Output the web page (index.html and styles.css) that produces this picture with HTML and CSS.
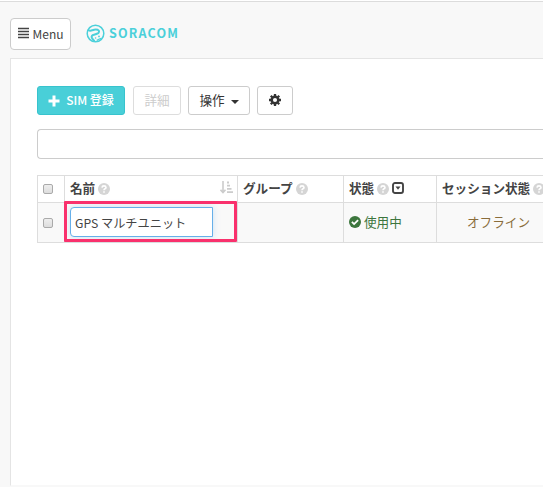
FILE: index.html
```html
<!DOCTYPE html>
<html lang="ja">
<head>
<meta charset="utf-8">
<title>SORACOM</title>
<link rel="stylesheet" href="styles.css">
</head>
<body>
<svg class="defs" width="0" height="0">
  <symbol id="help" viewBox="0 0 12 12"><circle cx="6" cy="6" r="6" fill="#d5d5d5"/><path d="M4 4.6Q4.1 2.9 6 2.9T8 4.5Q8 5.3 7 5.8Q6 6.3 6 7.2" fill="none" stroke="#fff" stroke-width="1.6"/><path d="M5.2 8.2h1.6v1.5H5.2z" fill="#fff"/></symbol>
</svg>
<header class="topbar">
  <button class="btn menu"><svg width="11" height="12" viewBox="0 0 11 12"><path d="M0 1.4h11M0 4.4h11M0 7.4h11M0 10.4h11" stroke="#444" stroke-width="1.5"/></svg><span>Menu</span></button>
  <div class="brand">
    <svg width="19" height="19" viewBox="0 0 19 19" fill="none" stroke="#4bd0da"><circle cx="9.5" cy="9.5" r="8.3" stroke-width="1.5"/><path d="M2.2 6Q4 7.4 6.4 6.2Q9.4 5 11.8 5.8Q14 7 12.3 9.2Q10.5 10.3 8 10.8Q5 11.6 5.8 13.7Q6.5 15.4 8.6 17.2" stroke-width="2"/><circle cx="9.6" cy="14" r=".8" fill="#4bd0da" stroke="none"/><circle cx="13" cy="12.4" r=".9" fill="#4bd0da" stroke="none"/><path d="M10.8 16.4l2.6-1.4 1.6-.6" stroke-width="1.2"/></svg>
    <span>SORACOM</span>
  </div>
</header>
<main class="panel">
  <div class="toolbar">
    <button class="btn primary"><svg width="12" height="12" viewBox="0 0 12 12"><path d="M6 .5v11M.5 6h11" stroke="#fff" stroke-width="3"/></svg><span>SIM 登録</span></button>
    <button class="btn detail"><span>詳細</span></button>
    <button class="btn actions"><span>操作</span><i class="caret"></i></button>
    <button class="btn gear"><svg width="12" height="12" viewBox="-6 -6 12 12"><circle r="3.3" fill="none" stroke="#333" stroke-width="2.5"/><path d="M0-6v2M0 4v2M-6 0h2M4 0h2M-4.2-4.2l1.4 1.4M2.8 2.8l1.4 1.4M-4.2 4.2l1.4-1.4M2.8-2.8l1.4-1.4" stroke="#333" stroke-width="2.3"/></svg></button>
  </div>
  <div class="search"></div>
  <div class="grid">
    <div class="cell head check"><i class="box"></i></div>
    <div class="cell head"><span>名前</span><svg class="help"><use href="#help"/></svg>
      <svg class="sort" width="13" height="13" viewBox="0 0 13 13"><path d="M3 0v11M.5 8.8L3 11.6l2.5-2.8" fill="none" stroke="#ccc" stroke-width="1.6"/><path d="M7 1.5h2M7 4.7h3M7 7.9h4.5M7 11.1h6" stroke="#ccc" stroke-width="1.8"/></svg></div>
    <div class="cell head"><span>グループ</span><svg class="help"><use href="#help"/></svg></div>
    <div class="cell head"><span>状態</span><svg class="help"><use href="#help"/></svg><svg class="drop" width="12" height="12" viewBox="0 0 12 12"><rect x="1" y="1" width="10" height="10" rx="2" fill="none" stroke="#444" stroke-width="1.9"/><path d="M3.5 4.6h5L6 7.7z" fill="#444"/></svg></div>
    <div class="cell head last"><span>セッション状態</span><svg class="help"><use href="#help"/></svg></div>
    <div class="cell check"><i class="box"></i></div>
    <div class="cell name"><div class="field">GPS マルチユニット</div><i class="highlight"></i></div>
    <div class="cell"></div>
    <div class="cell active"><svg width="12" height="12" viewBox="0 0 12 12"><circle cx="6" cy="6" r="6" fill="#3c763d"/><path d="M2.9 5.9l2.2 2.2 4-4" fill="none" stroke="#fff" stroke-width="1.8"/></svg><span>使用中</span></div>
    <div class="cell offline last"><span>オフライン</span></div>
  </div>
</main>
</body>
</html>
```
FILE: styles.css
```css
* { box-sizing: border-box; }
body {
  margin: 0;
  height: 487px;
  overflow: hidden;
  display: flex;
  flex-direction: column;
  background: #f8f8f8;
  border-top: 1px solid #fff;
  color: #444;
  font: 12.6px/20px "Noto Sans CJK JP", sans-serif;
}
.defs { position: absolute; }
.topbar {
  flex: none;
  height: 57px;
  padding: 17px 0 0 10px;
  border-top: 1px solid #dcdcdc;
  display: flex;
  align-items: flex-start;
}
.btn {
  height: 29px;
  padding: 0;
  display: flex;
  align-items: center;
  justify-content: center;
  border: 1px solid #ccc;
  border-radius: 3px;
  background: #fff;
  color: #333;
  font: inherit;
  white-space: nowrap;
}
.btn span { margin-top: -2px; }
.btn.menu { width: 61px; height: 32px; margin-top: -1px; gap: 4px; color: #444; border-radius: 4px; font-size: 12px; }
.btn.menu span { margin-top: 0; }
.menu svg { margin-top: -2px; }
.brand {
  display: flex;
  align-items: center;
  height: 19px;
  margin: 5px 0 0 15px;
  gap: 4px;
  color: #4bd0da;
  font-weight: 700;
  font-size: 12.5px;
  letter-spacing: 1.2px;
}
.brand span { margin-top: -2px; }
.panel {
  flex: none;
  height: 428px;
  margin-left: 10px;
  padding: 27px 0 0 26px;
  overflow: hidden;
  background: #fff;
  border: 1px solid #e4e4e4;
  border-right: 0;
  border-bottom-color: #f8f8f8;
}
.toolbar { display: flex; }
.btn.primary { width: 88px; gap: 6px; background: #49cfd8; border-color: #37c3cd; color: #fff; font-weight: 500; font-size: 12px; }
.btn.detail { width: 48px; margin-left: 8px; color: #ccc; border-color: #ddd; }
.btn.actions { width: 62px; margin-left: 7px; gap: 6px; }
.btn.gear { width: 36px; margin-left: 7px; }
.btn.gear svg { margin-top: -2px; }
.caret { border: 4px solid transparent; border-top-color: #333; border-bottom: 0; margin-top: 2px; }
.search {
  height: 30px;
  margin-top: 14px;
  border: 1px solid #ccc;
  border-right: 0;
  border-radius: 4px 0 0 4px;
}
.grid {
  display: grid;
  grid-template-columns: 27px 173px 106px 93px minmax(0, 1fr);
  grid-template-rows: 27px 40px;
  margin-top: 16px;
  border-top: 1px solid #ddd;
  border-left: 1px solid #ddd;
}
.cell {
  position: relative;
  display: flex;
  align-items: center;
  padding-left: 5px;
  border-right: 1px solid #ddd;
  border-bottom: 1px solid #ddd;
  background: #f9f9f9;
  white-space: nowrap;
}
.cell.last { border-right: 0; overflow: hidden; }
.head { background: #fff; font-weight: 700; }
.head span { margin-top: -3px; }
.help { width: 12px; height: 12px; margin-left: 3px; flex: none; }
.sort { margin: -4px 4px 0 auto; }
.drop { margin: -2px 0 0 3px; }
.check { padding: 0 0 0 5px; }
.box {
  width: 10px;
  height: 10px;
  border: 1px solid #aaa;
  border-radius: 2px;
  background: linear-gradient(#eee, #ddd);
}
.field {
  width: 143px;
  height: 30px;
  margin-top: -1px;
  padding: 5px 0 0 4px;
  border: 1px solid #66afe9;
  border-radius: 4px 0 0 4px;
  background: #fff;
  box-shadow: 0 0 7px rgba(102, 175, 233, .3);
  font-size: 12.2px;
}
.highlight {
  position: absolute;
  left: -1px;
  top: -2px;
  width: 173px;
  height: 41px;
  border: 3px solid #f9316d;
  border-radius: 1px;
}
.active { color: #3c763d; gap: 3px; }
.active svg { margin-top: -2px; }
.active span, .offline span { margin-top: -2px; }
.offline { color: #8a6d3b; padding-left: 30px; }
```
